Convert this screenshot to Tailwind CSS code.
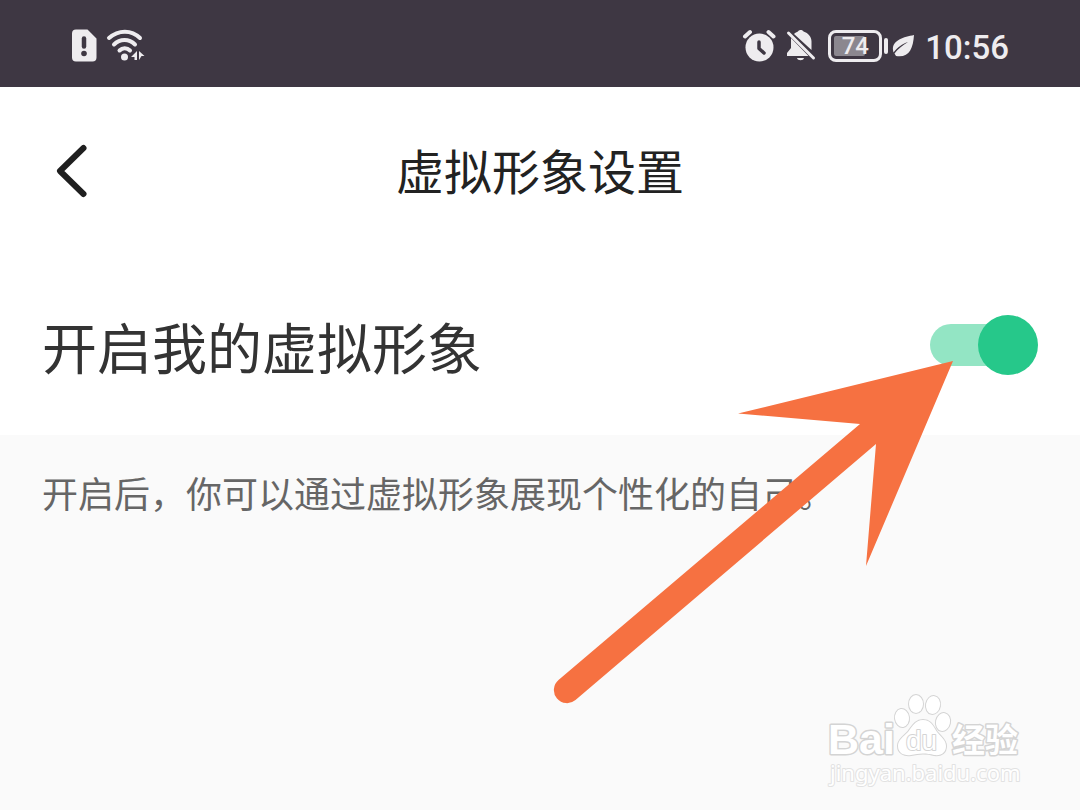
<!DOCTYPE html>
<html lang="zh-CN">
<head>
  <meta charset="UTF-8" />
  <meta name="viewport" content="width=device-width, initial-scale=1.0"/>
  <title>虚拟形象设置</title>
  <script src="https://cdn.jsdelivr.net/npm/@tailwindcss/browser@4"></script>
</head>
<body class="relative min-h-screen overflow-x-hidden flex flex-col bg-[#fafafa] font-['Noto_Sans_CJK_SC',sans-serif]">

  <!-- Status bar -->
  <div class="h-[87px] bg-[#3e3743] text-[#eeecef] flex items-center justify-between pt-1 pl-[70px] pr-[71px] font-[Roboto,sans-serif]">
    <div class="flex items-center gap-2">
      <svg class="w-7 h-9" viewBox="0 0 28 36" fill="currentColor">
        <path d="M6 1.500h11.500l9 9v19a4 4 0 0 1-4 4H6a4 4 0 0 1-4-4v-24a4 4 0 0 1 4-4z"/>
        <path d="M14 10.500v8" stroke="#3e3743" stroke-width="4.500" stroke-linecap="round"/>
        <circle cx="14" cy="25.500" r="2.800" fill="#3e3743"/>
      </svg>
      <svg class="w-10 h-9" viewBox="0 0 40 36" fill="none" stroke="currentColor" stroke-width="4" stroke-linecap="round">
        <path d="M3 10C12.500 1.500 25.500 1.500 34 10"/>
        <path d="M8 16.500C14 10.500 23 10.500 29 16.500"/>
        <path d="M13.500 22.500C16.500 19.500 21 19.500 24 22.500"/>
        <circle cx="18.500" cy="29" r="3.500" fill="currentColor" stroke="none"/>
        <path d="M31 23v9h-2.500v-3H25zM33 23l5.500 5h-3L33 32z" fill="currentColor" stroke="none"/>
      </svg>
    </div>
    <div class="flex items-center">
      <svg class="w-9 h-9 mr-2" viewBox="0 0 36 36" fill="currentColor">
        <circle cx="17.500" cy="19.500" r="14"/>
        <path d="M3 8.500l5-4.500M31.500 8.500l-5-4.500" stroke="currentColor" stroke-width="4" stroke-linecap="round"/>
        <path d="M17 14v6.500l5 4.500" fill="none" stroke="#3e3743" stroke-width="3.500" stroke-linecap="round" stroke-linejoin="round"/>
      </svg>
      <svg class="w-8 h-9 mr-2.5" viewBox="0 0 32 36" fill="currentColor">
        <path d="M5 10L22.500 28H1v-3l4-5zM8 6C9.500 4.500 10.500 4 12 3.500C13 1.500 16.500 1.500 17.500 3.500C22.500 5 25.500 9 25.500 13.500v8.500z"/>
        <path d="M11 30h7c-.5 3-6.500 3-7 0z"/>
        <path d="M2.500 5L27.500 30" stroke="currentColor" stroke-width="3" stroke-linecap="round"/>
      </svg>
      <div class="w-[54px] h-8 border-3 border-[#eeecef] rounded-lg p-[3px] text-2xl leading-5 font-medium">
        <div class="relative h-full">
          <div class="h-full bg-[#8b878f] rounded-xs" style="width: 74%"></div>
          <span class="absolute inset-0 text-center">74</span>
        </div>
      </div>
      <div class="w-1 h-4 bg-[#eeecef] rounded-sm ml-0.5 mr-[3px]"></div>
      <svg class="w-6 h-7 mr-2.5" viewBox="0 0 24 28" fill="currentColor">
        <path d="M23 3C13 5 1 8 2 18L2.500 20.500C7 15 11 12 17 10C11 14 7 17 3.500 21.500L5 24C18 26 22 17 23 3z"/>
      </svg>
      <span class="pt-1 text-[33px] leading-9 font-medium">10:56</span>
    </div>
  </div>

  <!-- Header -->
  <header class="h-[168px] bg-white grid grid-cols-[1fr_auto_1fr] items-center px-[50px]">
    <button type="button" aria-label="返回" class="w-11 h-16">
      <svg class="w-11 h-16" viewBox="0 0 44 64" fill="none" stroke="#1f1f1f" stroke-width="6" stroke-linecap="round" stroke-linejoin="round">
        <path d="M33.500 9L10 32L33.500 55"/>
      </svg>
    </button>
    <h1 class="pb-1 text-5xl text-[#222]">虚拟形象设置</h1>
  </header>

  <!-- Switch row -->
  <div class="h-[180px] bg-white flex items-center justify-between px-[42px]">
    <label for="avatar" class="text-[55px] leading-[60px] text-[#333]">开启我的虚拟形象</label>
    <input id="avatar" type="checkbox" role="switch" checked class="appearance-none relative w-[108px] h-[60px] cursor-pointer before:absolute before:left-0 before:top-[9px] before:w-[90px] before:h-[42px] before:rounded-full before:bg-gray-300 checked:before:bg-[#93e5c4] after:absolute after:left-0 after:top-0 after:size-[60px] after:rounded-full after:bg-gray-400 checked:after:left-12 checked:after:bg-[#26c88a]"/>
  </div>

  <p class="px-[42px] pt-[30px] text-4xl leading-[54px] text-[#666]">开启后，你可以通过虚拟形象展现个性化的自己。</p>

  <!-- Arrow pointing at the switch -->
  <svg class="absolute left-[553px] top-[360px] w-[402px] h-[346px] pointer-events-none" viewBox="553 360 402 346" fill="#f67141">
    <path d="M953 361L738 413.500L860 424L558.500 680A13 13 0 0 0 575.500 700L876 444L866 566z"/>
  </svg>

  <!-- Watermark -->
  <svg class="absolute right-[54px] bottom-[18px] w-[202px] h-[102px] pointer-events-none" viewBox="0 0 202 102" fill="#fff" stroke="#d4d4d4" stroke-width="2" stroke-linejoin="round" paint-order="stroke">
    <text x="4" y="64" font-family="Liberation Sans" font-weight="700" font-size="43" stroke-width="3">Bai</text>
    <ellipse cx="78" cy="28" rx="7" ry="9" transform="rotate(-8 78 28)"/>
    <ellipse cx="92" cy="14" rx="7" ry="9"/>
    <ellipse cx="109" cy="15" rx="7" ry="9" transform="rotate(10 109 15)"/>
    <ellipse cx="119" cy="32" rx="7" ry="9" transform="rotate(12 119 32)"/>
    <path d="M99 30C91 30 88 37 84 42C79 47 74 50 74 56C74 63 80 66 87 65C95 63 103 63 110 65C118 66 122 62 122 56C122 50 117 47 113 42C109 36 107 30 99 30z"/>
    <text x="82" y="60" font-family="Liberation Sans" font-weight="400" font-size="28">du</text>
    <text x="128" y="62" font-family="Noto Sans CJK SC" font-weight="700" font-size="33" stroke-width="3">经验</text>
    <text x="6" y="91" font-family="Noto Sans" font-size="22" stroke="#e2e2e2">jingyan.baidu.com</text>
  </svg>

</body>
</html>
